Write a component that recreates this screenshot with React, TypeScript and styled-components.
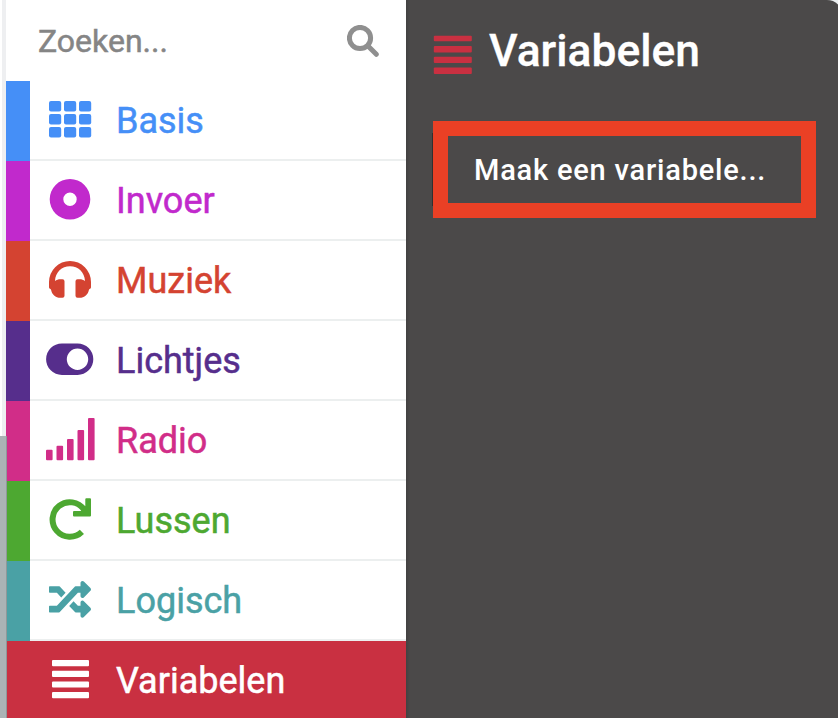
import React from 'react';
import styled, { createGlobalStyle } from 'styled-components';
import { FaRandom } from 'react-icons/fa';

const GlobalStyle = createGlobalStyle`
  * { box-sizing: border-box; }
  body { margin: 0; background: #ecf0f1; overflow: hidden; font-family: Roboto, "Liberation Sans", sans-serif; }
`;

const Page = styled.div`
  position: relative;
  display: flex;
  width: 838px;
  height: 718px;
  overflow: hidden;
`;

const Gutter = styled.div`
  flex: 0 0 6px;
  background: #eeeff1;
  border-left: 2px solid #fff;
`;

const ScrollThumb = styled.div`
  position: absolute;
  left: 0;
  top: 436px;
  bottom: 0;
  width: 7px;
  background: #abb3b5;
  border-right: 1px solid #8f9899;
`;

const Toolbox = styled.nav`
  display: flex;
  flex-direction: column;
  flex: 0 0 400px;
  background: #fff;
`;

const SearchBar = styled.div`
  display: flex;
  align-items: center;
  justify-content: space-between;
  flex: 0 0 81px;
  padding: 0 27px 0 32px;
  color: #8f8f8f;
`;

const SearchIcon = styled.svg`
  flex: none;
  width: 32px;
  height: 32px;
  fill: none;
  stroke: currentColor;
  stroke-width: 5px;
  stroke-linecap: round;
`;

const Placeholder = styled.span`
  color: #858585;
  font-size: 32px;
  line-height: 40px;
  -webkit-text-stroke: 0.5px currentColor;
`;

const Row = styled.div<{ $color: string; $selected?: boolean }>`
  display: flex;
  flex: 0 0 80px;
  color: ${(p) => (p.$selected ? '#fff' : p.$color)};
  background: ${(p) => (p.$selected ? p.$color : '#fff')};
`;

const Strip = styled.div<{ $color: string }>`
  flex: 0 0 24px;
  background: ${(p) => p.$color};
`;

const RowBody = styled.div<{ $selected?: boolean }>`
  display: flex;
  flex: 1;
  height: 80px;
  padding-left: 14px;
  border-bottom: 2px solid ${(p) => (p.$selected ? 'transparent' : '#ecefef')};
`;

const Glyph = styled.svg`
  flex: none;
  width: 54px;
  height: 78px;
  fill: currentColor;
`;

const Label = styled.span`
  margin-left: 18px;
  font-size: 36px;
  line-height: 80px;
  white-space: nowrap;
  -webkit-text-stroke: 0.5px currentColor;
`;

const Flyout = styled.section`
  flex: 0 0 437px;
  padding: 0 27px;
  background: linear-gradient(to right, #424141, #4b4949 4px);
  border-top-right-radius: 16px;
`;

const FlyoutHeader = styled.header`
  display: flex;
  height: 121px;
`;

const HeaderIcon = styled.svg`
  flex: none;
  width: 39px;
  height: 80px;
  fill: #c93041;
`;

const Title = styled.h1`
  margin: 0 0 0 17px;
  color: #fff;
  font-size: 44.4px;
  font-weight: 500;
  line-height: 103px;
  -webkit-text-stroke: 0.3px currentColor;
`;

const MakeButton = styled.button`
  display: block;
  width: 383px;
  height: 97px;
  padding: 1px 0 0 26px;
  border: 15px solid #ea4025;
  background: #4b4949;
  box-shadow: -13px 0 0 -12px #303030;
  color: #fff;
  font: 500 29px/66px Roboto, "Liberation Sans", sans-serif;
  letter-spacing: 0.8px;
  text-align: left;
  white-space: nowrap;
`;

const icons: Record<string, React.ReactNode> = {
  grid: [20, 33, 46].map((y) =>
    [49, 64, 79].map((x) => <rect key={`${x}-${y}`} x={x} y={y} width="12.2" height="10.6" rx="2" />)
  ),
  disc: (
    <path fillRule="evenodd" d="M49.7 38.3a20.3 20.3 0 1 1 40.6 0a20.3 20.3 0 1 1 -40.6 0zM63.3 38.3a6.7 6.7 0 1 0 13.4 0a6.7 6.7 0 1 0 -13.4 0z" />
  ),
  headphones: (
    <path d="M49 41a21 21 0 0 1 42 0V46.3q0 1-1 1.5l-1 .6c-.8 5-4.5 8.3-9.5 8.3h-2q-2 0-2-2V40.2q0-2 2-2h2c2.2 0 4 .6 5.5 1.8C84.5 31 78.3 25.2 70 25.2S55.5 31 55 40c1.5-1.2 3.3-1.8 5.5-1.8h2q2 0 2 2v14.5q0 2-2 2h-2c-5 0-8.7-3.3-9.5-8.3l-1-.6q-1-.5-1-1.5z" />
  ),
  toggle: (
    <path fillRule="evenodd" d="M61.9 22.4h15.6a15.8 15.8 0 0 1 0 31.6h-15.6a15.8 15.8 0 0 1 0-31.6zM66.8 38.2a10.7 10.7 0 1 0 21.4 0a10.7 10.7 0 1 0-21.4 0z" />
  ),
  signal: [[46, 48.7], [56.5, 44.8], [67, 38], [77.5, 29], [88, 17]].map(([x, y]) => (
    <rect key={x} x={x} y={y} width="6.6" height={59.2 - y} rx="1" />
  )),
  redo: (
    <>
      <path d="M84 28.5A17.3 17.3 0 1 0 81.9 50.9" fill="none" stroke="currentColor" strokeWidth="6" />
      <path d="M86.3 17.2H90q1 0 1 1V34.4q0 1-1 1H74q-1 0-1-1V31q0-1 1-1h7l4.3-5V18.2q0-1 1-1z" />
    </>
  ),
  shuffle: <FaRandom x="49" y="17.3" size={42} />,
  lines: [19.1, 29.8, 40.4, 51].map((y) => <rect key={y} x="52" y={y} width="37" height="6.2" rx="1" />),
};

const categories = [
  { name: 'Basis', color: '#458ff7', icon: 'grid' },
  { name: 'Invoer', color: '#c129cc', icon: 'disc' },
  { name: 'Muziek', color: '#d44331', icon: 'headphones' },
  { name: 'Lichtjes', color: '#562e8c', icon: 'toggle' },
  { name: 'Radio', color: '#d12d88', icon: 'signal' },
  { name: 'Lussen', color: '#4da831', icon: 'redo' },
  { name: 'Logisch', color: '#4aa1a5', icon: 'shuffle' },
  { name: 'Variabelen', color: '#c93041', icon: 'lines', selected: true },
];

export default function App() {
  return (
    <Page>
      <GlobalStyle />
      <Gutter />
      <Toolbox>
        <SearchBar>
          <Placeholder>Zoeken...</Placeholder>
          <SearchIcon viewBox="0 0 32 32">
            <circle cx="13" cy="13" r="10.6" />
            <path d="M21.5 21.5L29.3 29.3" />
          </SearchIcon>
        </SearchBar>
        {categories.map((c) => (
          <Row key={c.name} $color={c.color} $selected={c.selected}>
            <Strip $color={c.color} />
            <RowBody $selected={c.selected}>
              <Glyph viewBox="44 0 54 78">{icons[c.icon]}</Glyph>
              <Label>{c.name}</Label>
            </RowBody>
          </Row>
        ))}
      </Toolbox>
      <Flyout>
        <FlyoutHeader>
          <HeaderIcon viewBox="433 0 39 80">
            {[35.8, 46.1, 56.8, 67.6].map((y) => (
              <rect key={y} x="433.8" y={y} width="38" height={y < 40 ? 5.4 : 6.3} rx="1" />
            ))}
          </HeaderIcon>
          <Title>Variabelen</Title>
        </FlyoutHeader>
        <MakeButton>Maak een variabele...</MakeButton>
      </Flyout>
      <ScrollThumb />
    </Page>
  );
}
